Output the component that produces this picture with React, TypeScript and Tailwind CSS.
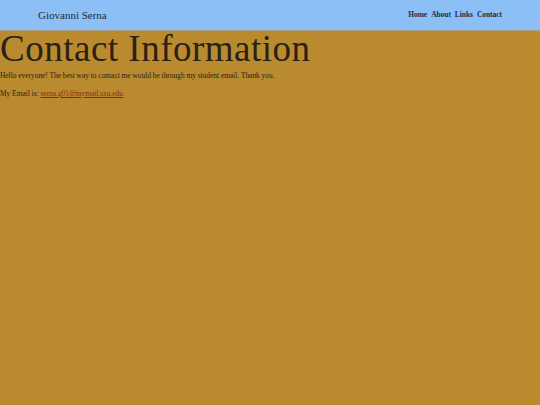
export default function App() {
  return (
    <div className="min-h-[405px] bg-[#b98b2e] text-[#2a2116] font-['Liberation_Serif',Georgia,serif]">
      {/* Nav */}
      <nav className="h-[31px] bg-[#8bbff5] border-b border-[#a59f8c] flex items-center justify-between pl-[38px] pr-[38px]">
        <span className="text-[11px] text-[#1f2a44]">Giovanni Serna</span>
        <ul className="flex gap-[4px] text-[7.4px] font-bold text-[#1f2a44]">
          <li>Home</li>
          <li>About</li>
          <li>Links</li>
          <li>Contact</li>
        </ul>
      </nav>

      <h1 className="text-[37px] leading-[36px] tracking-[0.5px]">Contact Information</h1>
      <p className="text-[7.4px] leading-[9px] mt-[4px]">
        Hello everyone! The best way to contact me would be through my student email. Thank you.
      </p>
      <p className="text-[7.4px] leading-[9px] mt-[9px]">
        My Email is:{" "}
        <a href="#" className="text-[#8b2a14] underline">serna.g01@mymail.sxu.edu</a>
      </p>
    </div>
  );
}
